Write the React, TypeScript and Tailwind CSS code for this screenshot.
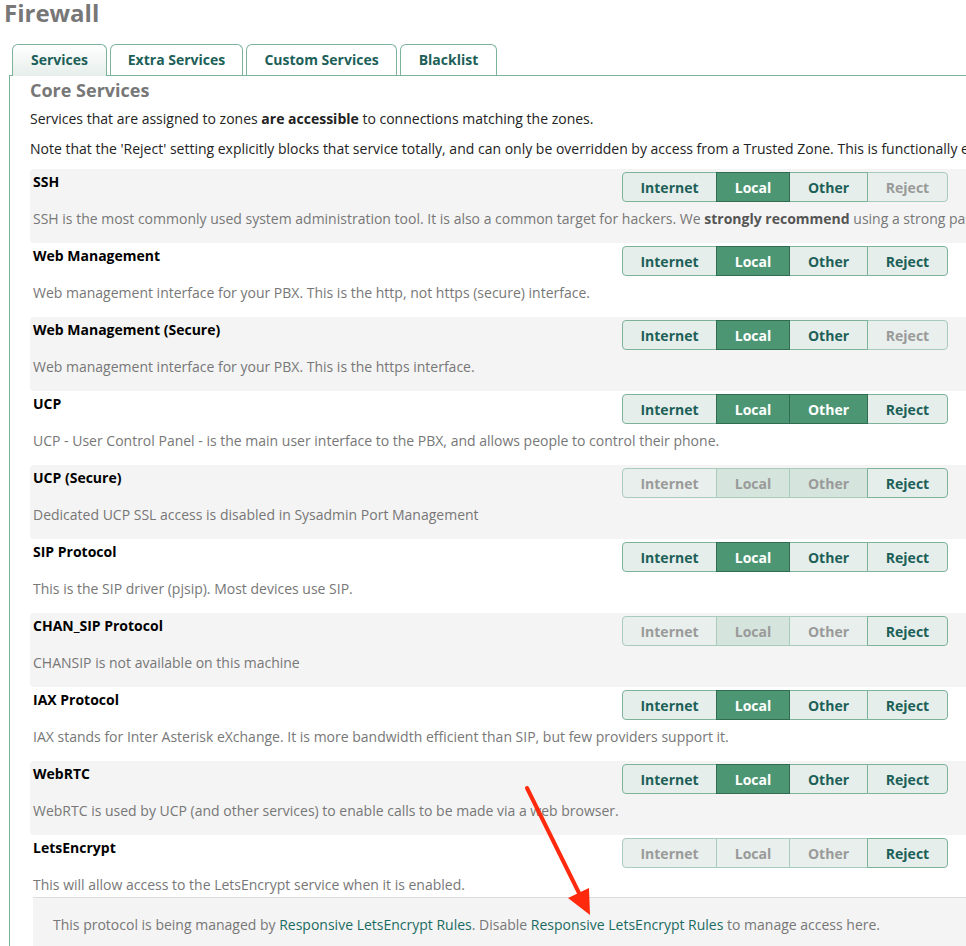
import React from "react";

type Zone = "off" | "on" | "dis" | "dison";

type Service = {
  name: string;
  desc: React.ReactNode;
  zones: [Zone, Zone, Zone, Zone];
};

const labels = ["Internet", "Local", "Other", "Reject"];
const widths = ["w-[95px]", "w-[74px]", "w-[79px]", "w-[81px]"];

const zoneStyle: Record<Zone, string> = {
  off: "bg-[#e5eeea] text-[#1d5f59] border-[#7db39b] z-10",
  on: "bg-[#4d9673] text-white border-[#2f6c50] z-20",
  dis: "bg-[#e8efec] text-[#9a9a9a] border-[#a8cbbb]",
  dison: "bg-[#d5e5dd] text-[#9a9a9a] border-[#a8cbbb]",
};

const services: Service[] = [
  {
    name: "SSH",
    desc: (
      <>
        SSH is the most commonly used system administration tool. It is also a common target for hackers. We{" "}
        <b className="text-[#555]">strongly recommend</b> using a strong password and SSH keys.
      </>
    ),
    zones: ["off", "on", "off", "dis"],
  },
  {
    name: "Web Management",
    desc: "Web management interface for your PBX. This is the http, not https (secure) interface.",
    zones: ["off", "on", "off", "off"],
  },
  {
    name: "Web Management (Secure)",
    desc: "Web management interface for your PBX. This is the https interface.",
    zones: ["off", "on", "off", "dis"],
  },
  {
    name: "UCP",
    desc: "UCP - User Control Panel - is the main user interface to the PBX, and allows people to control their phone.",
    zones: ["off", "on", "on", "off"],
  },
  {
    name: "UCP (Secure)",
    desc: "Dedicated UCP SSL access is disabled in Sysadmin Port Management",
    zones: ["dis", "dison", "dison", "off"],
  },
  {
    name: "SIP Protocol",
    desc: "This is the SIP driver (pjsip). Most devices use SIP.",
    zones: ["off", "on", "off", "off"],
  },
  {
    name: "CHAN_SIP Protocol",
    desc: "CHANSIP is not available on this machine",
    zones: ["dis", "dison", "dis", "off"],
  },
  {
    name: "IAX Protocol",
    desc: "IAX stands for Inter Asterisk eXchange. It is more bandwidth efficient than SIP, but few providers support it.",
    zones: ["off", "on", "off", "off"],
  },
  {
    name: "WebRTC",
    desc: "WebRTC is used by UCP (and other services) to enable calls to be made via a web browser.",
    zones: ["off", "on", "off", "off"],
  },
];

const ZoneButtons = ({ zones }: { zones: Zone[] }) => (
  <div className="flex h-[30px]">
    {zones.map((z, i) => (
      <div
        key={i}
        className={`relative flex items-center justify-center border text-[14px] font-bold ${widths[i]} ${zoneStyle[z]} ${
          i > 0 ? "-ml-px" : ""
        } ${i === 0 ? "rounded-l-[4px]" : ""} ${i === 3 ? "rounded-r-[4px]" : ""}`}
      >
        {labels[i]}
      </div>
    ))}
  </div>
);

const ServiceRow = ({
  s,
  shaded,
  children,
}: {
  s: Service;
  shaded: boolean;
  children?: React.ReactNode;
}) => (
  <div className={`pl-[3px] pt-[3px] rounded-[4px] ${shaded ? "bg-[#f4f4f4]" : ""} ${children ? "" : "h-[74px]"}`}>
    <div className="flex items-start">
      <div className="w-[589px] leading-[20px] text-[14px] font-bold text-black">{s.name}</div>
      <ZoneButtons zones={s.zones} />
    </div>
    <div className="mt-[7px] leading-[20px] text-[14px] text-[#777] whitespace-nowrap">{s.desc}</div>
    {children}
  </div>
);

const tabs = [
  { label: "Services", w: "w-[95px]", active: true },
  { label: "Extra Services", w: "w-[133px]", active: false },
  { label: "Custom Services", w: "w-[151px]", active: false },
  { label: "Blacklist", w: "w-[97px]", active: false },
];

export default function App() {
  return (
    <div className="relative w-[966px] h-[946px] overflow-hidden bg-white font-['Open_Sans',sans-serif]">
      <h1 className="pl-[4px] text-[24px] leading-[26px] font-bold text-[#777]">Firewall</h1>

      {/* tab strip */}
      <div className="mt-[18px] h-[31px] pl-[12px] flex items-start gap-[3px] relative z-10">
        {tabs.map((t) => (
          <div
            key={t.label}
            className={`${t.w} flex items-center justify-center rounded-t-[6px] border border-b-0 border-[#7db39b] text-[14px] font-bold text-[#1d5f59] ${
              t.active ? "h-[32px] bg-gradient-to-b from-white to-[#e6eeea] pb-[2px]" : "h-[31px] bg-white pb-[1px]"
            }`}
          >
            {t.label}
          </div>
        ))}
      </div>

      <div className="ml-[9px] border-l border-t border-[#7db39b] pl-[20px]">
        <h2 className="mt-[2px] text-[18px] leading-[24px] font-bold text-[#777]">Core Services</h2>
        <p className="mt-[7px] text-[14px] leading-[20px] text-[#222] whitespace-nowrap">
          Services that are assigned to zones <b>are accessible</b> to connections matching the zones.
        </p>
        <p className="mt-[10px] text-[14px] leading-[20px] text-[#222] whitespace-nowrap">
          Note that the 'Reject' setting explicitly blocks that service totally, and can only be overridden by access
          from a Trusted Zone. This is functionally equivalent to disabling the service.
        </p>

        <div className="mt-[10px] w-[1000px]">
          {services.map((s, i) => (
            <ServiceRow key={s.name} s={s} shaded={i % 2 === 0} />
          ))}
          <ServiceRow
            s={{
              name: "LetsEncrypt",
              desc: "This will allow access to the LetsEncrypt service when it is enabled.",
              zones: ["dis", "dis", "dis", "off"],
            }}
            shaded={false}
          >
            <div className="mt-[2px] h-[60px] bg-[#f4f4f4] border-t border-[#dcdcdc] pl-[20px] pt-[17px] text-[14px] leading-[20px] text-[#777] whitespace-nowrap">
              This protocol is being managed by <span className="text-[#1b6b62]">Responsive LetsEncrypt Rules</span>.
              Disable <span className="text-[#1b6b62]">Responsive LetsEncrypt Rules</span> to manage access here.
            </div>
          </ServiceRow>
        </div>
      </div>

      {/* red pointer arrow */}
      <svg className="absolute left-0 top-0 pointer-events-none" width="966" height="946">
        <line x1="527" y1="788" x2="580" y2="895" stroke="#ff2a0d" strokeWidth="4" strokeLinecap="round" />
        <polygon points="568,898 589,888 590,915" fill="#ff2a0d" />
      </svg>
    </div>
  );
}
